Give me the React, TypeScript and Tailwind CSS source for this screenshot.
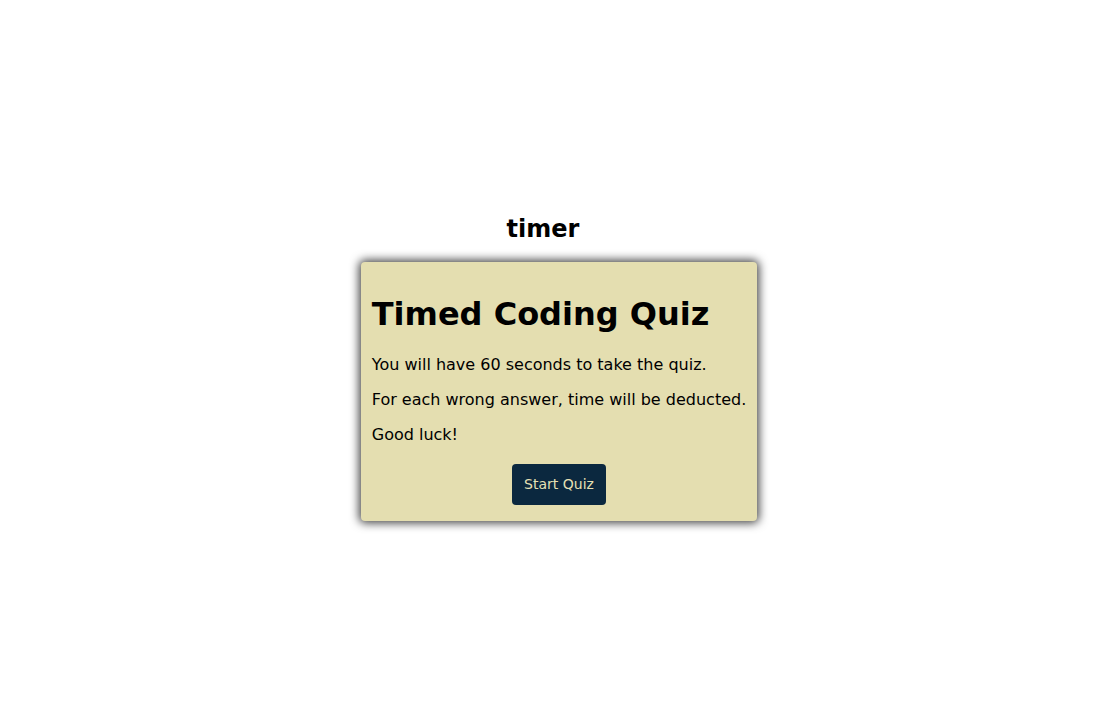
export default function App() {
  return (
    <div
      className="min-h-[714px] bg-white flex flex-col items-center pt-[213px] text-black"
      style={{ fontFamily: 'Verdana, "DejaVu Sans", sans-serif' }}
    >
      <h2 className="text-[24px] font-bold leading-[32px] mr-[32px]">timer</h2>

      <div className="mt-[17px] w-fit bg-[#e4deb0] rounded-[4px] shadow-[0_0_10px_2px_rgba(0,0,0,0.75)] px-[11px] pt-[33px] pb-[16px]">
        <h1 className="text-[32px] font-bold leading-[38px] mb-[22px]">Timed Coding Quiz</h1>
        <p className="text-[16px] leading-[20px] mb-[15px]">You will have 60 seconds to take the quiz.</p>
        <p className="text-[16px] leading-[20px] mb-[15px]">For each wrong answer, time will be deducted.</p>
        <p className="text-[16px] leading-[20px] mb-[19px]">Good luck!</p>
        <div className="flex justify-center">
          <button className="bg-[#0b283f] text-[#e6e0b4] text-[14px] rounded-[4px] h-[41px] px-[12px]">
            Start Quiz
          </button>
        </div>
      </div>
    </div>
  );
}
